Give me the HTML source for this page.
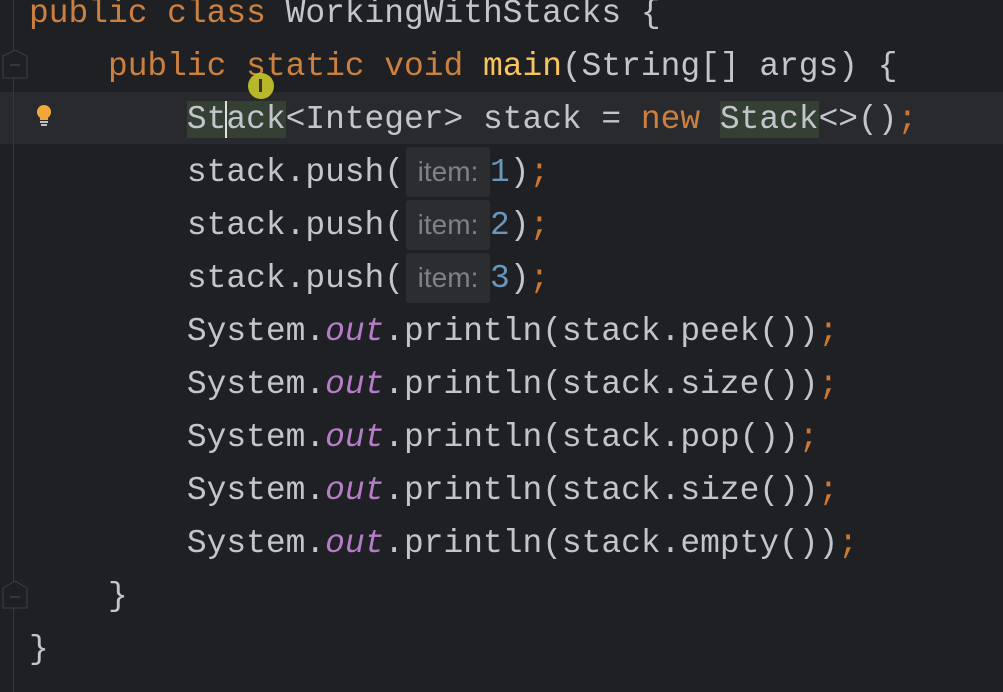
<!DOCTYPE html>
<html><head><style>
body{margin:0;width:1003px;height:692px;background:#1f2023;overflow:hidden;position:relative;font-family:"Liberation Mono",monospace;}
.ln{position:absolute;left:29px;height:53px;line-height:53px;font-size:32.9px;color:#c3c5cb;white-space:pre;}
.k{color:#cc8040}.m{color:#f9c35e}.o{color:#b77cc8;font-style:italic}.n{color:#6897bb}.s{color:#cc7832}
.hl{background:#334033}
.h{display:inline-block;background:#2c2d30;color:#7f8186;font-family:"Liberation Sans",sans-serif;font-size:28px;width:84px;text-align:center;height:50px;line-height:50px;vertical-align:top;margin-top:1px;margin-left:2px;border-radius:3px}
</style></head><body>
<div style="position:absolute;left:0;top:92px;width:1003px;height:52px;background:#282a2e"></div>
<div style="position:absolute;left:13px;top:0;width:1px;height:692px;background:#35373b"></div>
<svg style="position:absolute;left:2px;top:50px" width="26" height="32"><path d="M1 6 L13 0 L25 6 V28 H1 Z" fill="#1f2023" stroke="#3c3e42"/><path d="M8 15 H18" stroke="#4a4c50"/></svg>
<svg style="position:absolute;left:2px;top:580px" width="26" height="30"><path d="M1 8 L13 1 L25 8 V28 H1 Z" fill="#1f2023" stroke="#3c3e42"/><path d="M8 17 H18" stroke="#4a4c50"/></svg>
<svg style="position:absolute;left:34px;top:104px" width="20" height="24"><circle cx="10" cy="8" r="7" fill="#f2a73b"/><rect x="6" y="14" width="8" height="2" fill="#f2a73b"/><rect x="6" y="17" width="8" height="2" fill="#c0c0c0"/><rect x="7" y="20" width="6" height="2" fill="#c0c0c0"/></svg>
<div class="ln" style="top:-13px"><span class="k">public class</span> WorkingWithStacks {</div>
<div class="ln" style="top:40px">    <span class="k">public static void</span> <span class="m">main</span>(String[] args) {</div>
<div class="ln" style="top:93px">        <span class="hl">St<span style="border-left:2px solid #e0e0e0;margin-left:-1px;margin-right:-1px"></span>ack</span>&lt;Integer&gt; stack = <span class="k">new</span> <span class="hl">Stack</span>&lt;&gt;()<span class="s">;</span></div>
<div class="ln" style="top:146px">        stack.push(<span class="h">item:</span><span class="n">1</span>)<span class="s">;</span></div>
<div class="ln" style="top:199px">        stack.push(<span class="h">item:</span><span class="n">2</span>)<span class="s">;</span></div>
<div class="ln" style="top:252px">        stack.push(<span class="h">item:</span><span class="n">3</span>)<span class="s">;</span></div>
<div class="ln" style="top:305px">        System.<span class="o">out</span>.println(stack.peek())<span class="s">;</span></div>
<div class="ln" style="top:358px">        System.<span class="o">out</span>.println(stack.size())<span class="s">;</span></div>
<div class="ln" style="top:411px">        System.<span class="o">out</span>.println(stack.pop())<span class="s">;</span></div>
<div class="ln" style="top:464px">        System.<span class="o">out</span>.println(stack.size())<span class="s">;</span></div>
<div class="ln" style="top:517px">        System.<span class="o">out</span>.println(stack.empty())<span class="s">;</span></div>
<div class="ln" style="top:570px">    }</div>
<div class="ln" style="top:623px">}</div>
<div style="position:absolute;left:248px;top:73px;width:26px;height:26px;border-radius:50%;background:#c9c82a;opacity:.9"></div>
<div style="position:absolute;left:259px;top:79px;width:3px;height:13px;background:#333"></div>
</body></html>
